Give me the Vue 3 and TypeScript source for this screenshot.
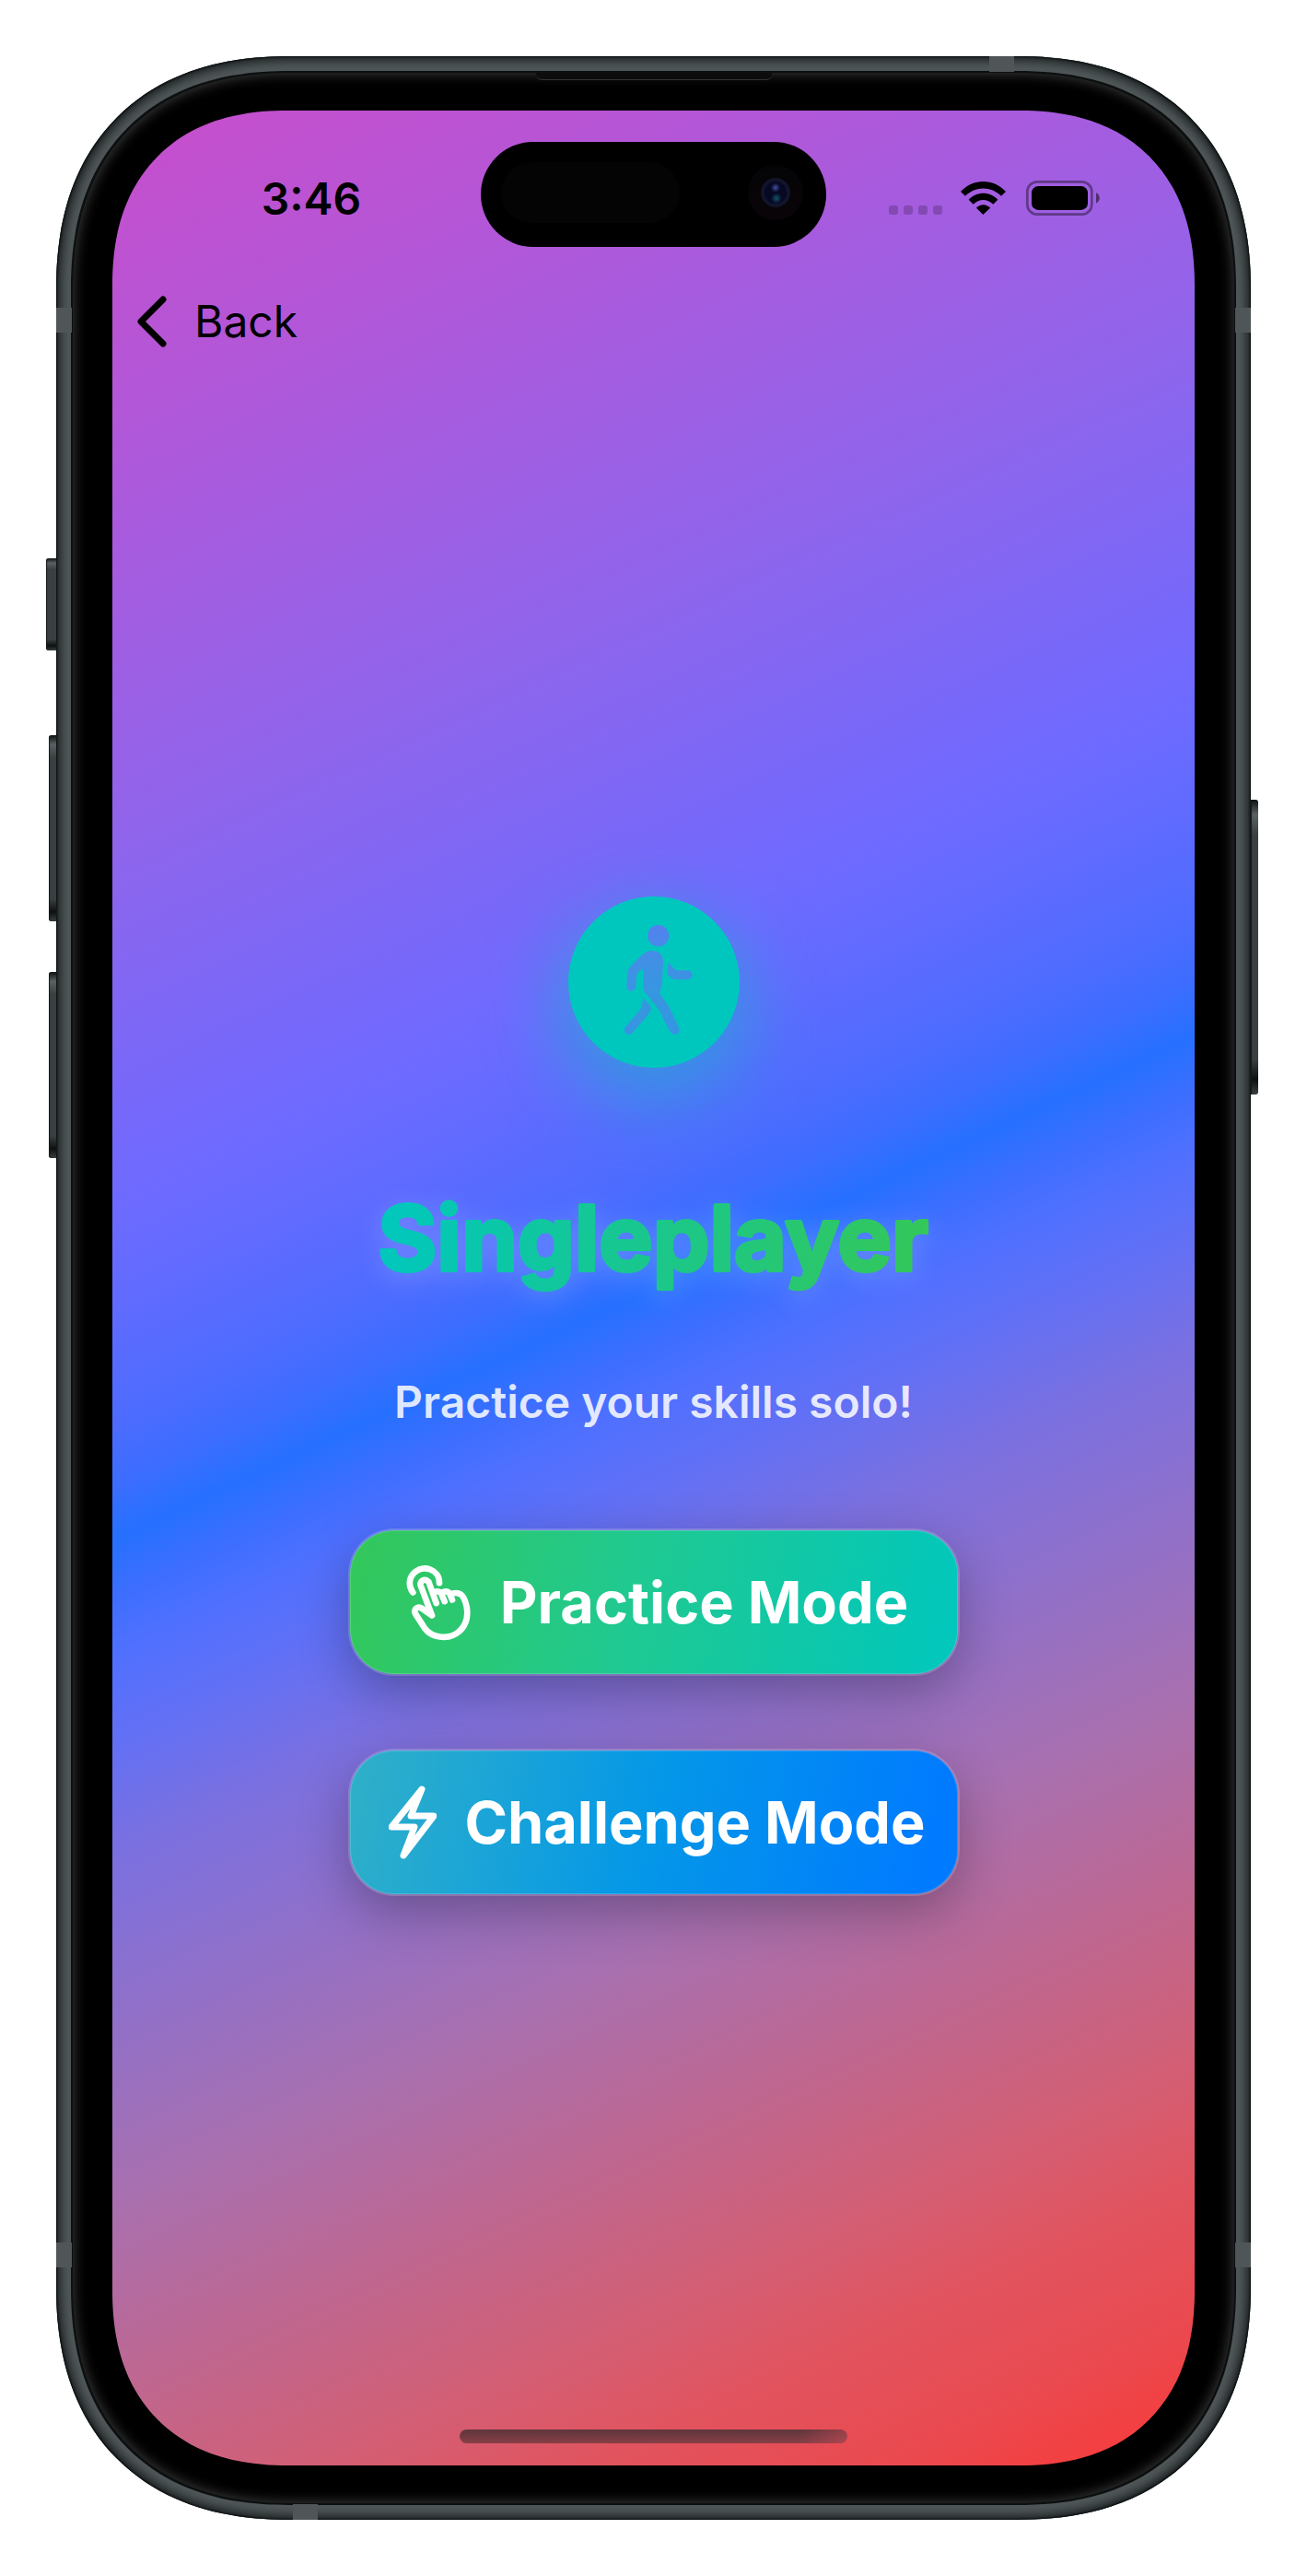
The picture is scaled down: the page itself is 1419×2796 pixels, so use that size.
<script setup lang="ts">
interface Mode {
  id: string
  label: string
  icon: 'tap' | 'bolt'
}

const title = 'Singleplayer'
const subtitle = 'Practice your skills solo!'
const modes: Mode[] = [
  { id: 'practice', label: 'Practice Mode', icon: 'tap' },
  { id: 'challenge', label: 'Challenge Mode', icon: 'bolt' },
]
const hardware = ['action', 'volume-up', 'volume-down', 'power']
const bands = ['left-top', 'left-bottom', 'right-top', 'right-bottom', 'top', 'bottom']
</script>

<template>
  <div class="page">
    <div class="device">
      <span v-for="key in hardware" :key="key" class="key" :class="key"></span>
      <div class="bezel">
        <span class="speaker"></span>
        <div class="screen">
          <header class="status">
            <time class="clock">3:46</time>
            <div class="island">
              <span class="sensor"></span>
              <span class="camera"><span class="lens"></span></span>
            </div>
            <div class="signals">
              <span class="dots"><i v-for="n in 4" :key="n"></i></span>
              <svg class="wifi" viewBox="0 0 147 108" aria-label="Wi-Fi">
                <path d="M0 33C40-11 107-11 147 33L132 47C99 14 48 14 15 47Z" />
                <path d="M26 59C52 31 95 31 121 59L106 74C87 55 60 55 41 74Z" />
                <path d="M51 86C63 72 84 72 96 86L73 108Z" />
              </svg>
              <svg class="battery" viewBox="0 0 240 114" aria-label="Battery full">
                <rect x="4" y="4" width="210" height="106" rx="32" fill="none" stroke="#000" stroke-opacity=".4" stroke-width="8" />
                <rect x="18" y="18" width="183" height="78" rx="22" />
                <path d="M228 40C243 47 243 67 228 74Z" fill-opacity=".5" />
              </svg>
            </div>
          </header>

          <nav class="nav">
            <button type="button" class="back">
              <svg viewBox="0 0 32 56" aria-hidden="true">
                <path d="M28 4L4 28L28 52" fill="none" stroke="#000" stroke-width="7" stroke-linecap="round" stroke-linejoin="round" />
              </svg>
              Back
            </button>
          </nav>

          <main class="content">
            <svg class="badge" viewBox="348 221 558 558" aria-hidden="true">
              <path
                fill="#00c7be"
                fill-rule="evenodd"
                d="M627 221A279 279 0 0 1 627 779A279 279 0 0 1 627 221Z
                   M641 314A35 35 0 0 0 641 384A35 35 0 0 0 641 314Z
                   M622 398C609 398 599 402 589 411L552 447C545 454 542 460 541 469L538 513C537 522 544 529 552 529C561 529 567 523 568 515L571 477C571 474 572 472 574 470L584 461C588 457 593 458 593 463L591 510C591 520 594 528 600 536L638 583C640 586 642 589 644 593L679 660C690 681 717 668 708 648L678 584C676 580 674 576 671 572L648 541C645 537 645 534 647 529C651 517 653 506 654 495L657 434C658 413 643 398 622 398Z
                   M674 438L695 458C699 462 702 462 707 462H737A15 15 0 0 1 737 492H699C692 492 688 490 683 486L675 479C671 475 671 474 671 469L673 440Z
                   M593 551L614 576C617 579 618 583 617 588C616 594 614 599 610 604L557 665C543 680 522 662 535 645L581 591C584 587 586 583 587 578L592 554Z"
              />
            </svg>

            <h1 class="title">
              <svg viewBox="0 0 660 120" role="img" :aria-label="title">
                <defs>
                  <linearGradient id="title-fill" gradientUnits="userSpaceOnUse" x1="32" y1="0" x2="628" y2="60">
                    <stop offset="0" stop-color="#00c7be" />
                    <stop offset="1" stop-color="#34c759" />
                  </linearGradient>
                </defs>
                <text x="329" y="90" text-anchor="middle">{{ title }}</text>
              </svg>
            </h1>
            <p class="subtitle">{{ subtitle }}</p>

            <div class="modes">
              <button v-for="mode in modes" :key="mode.id" type="button" class="mode" :class="mode.id">
                <svg v-if="mode.icon === 'tap'" class="tap" viewBox="92 80 216 248" aria-hidden="true">
                  <path d="M114 171C99 152 100 126 116 109C148 76 201 97 200 140" />
                  <path d="M190 206L167 141C161 123 134 129 139 148L176 246L142 222C127 214 114 228 123 242L152 287C178 322 232 324 262 300C288 278 294 246 289 218C284 195 277 177 263 174C254 171 243 174 237 178" />
                  <path d="M180 172C191 165 203 167 207 176L217 200M209 172C220 164 231 168 235 178L242 195" />
                </svg>
                <svg v-else class="bolt" viewBox="0 0 52 80" aria-hidden="true">
                  <path d="M36 4L3 45H28L16 76L49 33H24Z" />
                </svg>
                <span>{{ mode.label }}</span>
              </button>
            </div>
          </main>

          <footer class="home"><span></span></footer>
        </div>
      </div>
      <span v-for="band in bands" :key="band" class="band" :class="band"></span>
    </div>
  </div>
</template>

<style>
body {
  background: #fff;
}
</style>

<style scoped>
* {
  box-sizing: border-box;
}
.page {
  display: flex;
  min-height: 100vh;
  padding: 61px;
  font-family: Inter, "Liberation Sans", sans-serif;
  color: #000;
}
.device {
  position: relative;
  display: flex;
  flex: 1;
  padding: 18px;
  border-radius: 225px;
  background: #515859;
  box-shadow: inset 0 0 2px 1px #0b0f10, inset 0 0 12px 4px #14191a;
}
.bezel {
  position: relative;
  display: flex;
  flex: 1;
  padding: 41px 43px;
  border-radius: 207px;
  background: #000;
  box-shadow: 0 0 0 2px #0c1010, inset 0 0 14px 1px #3c3c3c;
}
.screen {
  display: flex;
  flex: 1;
  flex-direction: column;
  overflow: hidden;
  border-radius: 165px;
  background: linear-gradient(155deg, #c84ecb 0%, #ad59db 13%, #8e65ec 26%, #6f6aff 38%, #606bff 42%, #4c6cff 46%, #3d6dff 48%, #2670ff 50%, #3d6eff 52%, #5070ff 54%, #6270f5 57%, #7b70e0 61%, #a870b0 73%, #d06078 85%, #e1545f 90%, #ea494f 95%, #fb3836 100%);
}
@supports (corner-shape: superellipse(1.2)) {
  .device {
    border-radius: 254px;
    corner-shape: superellipse(1.2);
  }
  .bezel {
    border-radius: 236px;
    corner-shape: superellipse(1.2);
  }
  .screen {
    border-radius: 190px;
    corner-shape: superellipse(1.2);
  }
}

/* Hardware details around the frame */
.key {
  position: absolute;
  left: -8px;
  width: 8px;
  height: 202px;
  border-radius: 3px 0 0 3px;
  background: linear-gradient(#0c1011, #5a6162 5%, #3a4041 12%, #3a4041 88%, #0c1011 95%, #3a4041);
  box-shadow: inset 1px 0 1px #14191a;
}
.action {
  left: -11px;
  width: 11px;
  top: 545px;
  height: 100px;
}
.volume-up {
  top: 737px;
}
.volume-down {
  top: 994px;
}
.power {
  top: 807px;
  right: -8px;
  left: auto;
  height: 320px;
  border-radius: 0 3px 3px 0;
}
.band {
  position: absolute;
  width: 17px;
  height: 27px;
  background: #505657;
}
.left-top,
.right-top {
  top: 273px;
}
.left-bottom,
.right-bottom {
  bottom: 274px;
}
.left-top,
.left-bottom {
  left: 0;
}
.right-top,
.right-bottom {
  right: 0;
}
.top,
.bottom {
  width: 27px;
  height: 17px;
}
.top {
  top: 0;
  right: 257px;
}
.bottom {
  bottom: 0;
  left: 257px;
}
.speaker {
  position: absolute;
  top: 0;
  left: 50%;
  width: 256px;
  height: 8px;
  margin-left: -128px;
  border-bottom: 1px solid #333;
  border-radius: 0 0 6px 6px;
  background: #0d0d0d;
}

/* Status bar */
.status {
  display: grid;
  grid-template-columns: 1fr 375px 1fr;
  align-items: center;
  padding-top: 34px;
}
.clock {
  padding: 10px 0 0 32px;
  font-size: 48px;
  font-weight: 600;
  line-height: 60px;
  text-align: center;
}
.island {
  display: flex;
  align-items: center;
  justify-content: space-between;
  height: 114px;
  padding: 0 25px 4px 22px;
  border-radius: 57px;
  background: #000;
}
.sensor {
  width: 194px;
  height: 66px;
  border-radius: 33px;
  background: #040404;
}
.camera {
  display: grid;
  place-items: center;
  width: 60px;
  height: 60px;
  border-radius: 50%;
  background: linear-gradient(#040406, #0a0409);
}
.lens {
  width: 32px;
  height: 32px;
  border: 4px solid #12142a;
  border-radius: 50%;
  background:
    radial-gradient(circle at 50% 28%, #4350a0 0, transparent 24%),
    radial-gradient(circle at 54% 76%, #145566 0, transparent 26%),
    #060824;
}
.signals {
  display: flex;
  align-items: flex-end;
  justify-content: center;
  padding: 8px 36px 0 0;
}
.dots {
  display: flex;
  gap: 6px;
  margin-right: 20px;
  padding-bottom: 1px;
}
.dots i {
  width: 10px;
  height: 10px;
  border-radius: 3px;
  background: rgba(0, 0, 0, 0.2);
}
.wifi {
  width: 49px;
  height: 36px;
  margin: 0 22px 1px 0;
}
.battery {
  width: 80px;
  height: 38px;
}

/* Navigation bar */
.nav {
  display: flex;
  height: 132px;
  margin-top: 15px;
  padding-left: 27px;
}
.back {
  display: flex;
  align-items: center;
  gap: 30px;
  padding: 0;
  border: 0;
  background: none;
  color: inherit;
  font: 400 48px/60px Inter, "Liberation Sans", sans-serif;
}
.back svg {
  width: 32px;
  height: 56px;
}

/* Main content */
.content {
  display: flex;
  flex: 1;
  flex-direction: column;
  align-items: center;
  justify-content: center;
  padding-bottom: 3px;
}
.badge {
  width: 186px;
  height: 186px;
  overflow: visible;
  filter: drop-shadow(0 28px 44px rgba(0, 199, 190, 0.65));
}
.title {
  margin: 130px 0 0;
  height: 120px;
}
.title svg {
  display: block;
  width: 660px;
  height: 120px;
  overflow: visible;
  filter: drop-shadow(0 6px 14px rgba(255, 255, 255, 0.18));
}
.title text {
  fill: url(#title-fill);
  stroke: url(#title-fill);
  stroke-width: 4px;
  stroke-linejoin: round;
  font-size: 98px;
  font-weight: 700;
}
.subtitle {
  margin: 83px 0 0;
  color: rgba(255, 255, 255, 0.85);
  font-size: 48px;
  font-weight: 600;
  line-height: 60px;
}
.modes {
  display: flex;
  flex-direction: column;
  gap: 83px;
  width: 660px;
  margin-top: 109px;
}
.mode {
  display: flex;
  align-items: center;
  justify-content: center;
  gap: 30px;
  height: 156px;
  padding: 0 0 0 8px;
  border: 0;
  border-radius: 48px;
  box-shadow:
    inset 0 0 0 1px rgba(255, 255, 255, 0.18),
    0 0 0 2px rgba(255, 255, 255, 0.18),
    0 18px 56px rgba(0, 0, 0, 0.3);
  color: #fff;
  font: 700 63px/80px Inter, "Liberation Sans", sans-serif;
  white-space: nowrap;
}
.practice {
  background: linear-gradient(103deg, #34c759, #20c990 45%, #00c7be);
}
.challenge {
  background: linear-gradient(103deg, #30b0c7, #0497e8 50%, #007aff 95%);
}
.mode path {
  fill: none;
  stroke: #fff;
  stroke-linecap: round;
  stroke-linejoin: round;
}
.tap {
  width: 72px;
  height: 83px;
}
.tap path {
  stroke-width: 20px;
}
.bolt {
  width: 52px;
  height: 80px;
}
.bolt path {
  stroke-width: 7px;
}
.home {
  display: flex;
  justify-content: center;
  padding: 20px 0 24px;
}
.home span {
  width: 421px;
  height: 15px;
  border-radius: 8px;
  background:
    linear-gradient(90deg, transparent 88%, rgba(229, 82, 95, 0.4)),
    linear-gradient(#5e363c, #883f46);
}
</style>
